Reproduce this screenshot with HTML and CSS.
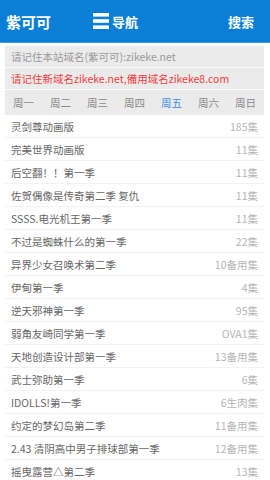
FILE: index.html
```html
<!DOCTYPE html>
<html lang="zh-CN">
<head>
<meta charset="utf-8">
<link rel="stylesheet" href="styles.css">
</head>
<body>
<header class="top">
  <div class="logo">紫可可</div>
  <div class="nav">
    <svg class="menu-ic" width="16" height="16" viewBox="0 0 16 16"><rect x="0" y="0" width="16" height="3.6" fill="#fff"/><rect x="0" y="6.2" width="16" height="3.6" fill="#fff"/><rect x="0" y="12.4" width="16" height="3.6" fill="#fff"/></svg>
    <span>导航</span>
  </div>
  <div class="search">搜索</div>
</header>
<main class="wrap">
  <div class="notice">请记住本站域名(紫可可):zikeke.net</div>
  <div class="notice red">请记住新域名zikeke.net,備用域名zikeke8.com</div>
  <div class="tabs">
    <span>周一</span><span>周二</span><span>周三</span><span>周四</span><span class="on">周五</span><span>周六</span><span>周日</span>
  </div>
  <ul class="list">
    <li><span class="t">灵剑尊动画版</span><span class="c">185集</span></li>
    <li><span class="t">完美世界动画版</span><span class="c">11集</span></li>
    <li><span class="t">后空翻！！第一季</span><span class="c">11集</span></li>
    <li><span class="t">佐贺偶像是传奇第二季 复仇</span><span class="c">11集</span></li>
    <li><span class="t">SSSS.电光机王第一季</span><span class="c">11集</span></li>
    <li><span class="t">不过是蜘蛛什么的第一季</span><span class="c">22集</span></li>
    <li><span class="t">异界少女召唤术第二季</span><span class="c">10备用集</span></li>
    <li><span class="t">伊甸第一季</span><span class="c">4集</span></li>
    <li><span class="t">逆天邪神第一季</span><span class="c">95集</span></li>
    <li><span class="t">弱角友崎同学第一季</span><span class="c">OVA1集</span></li>
    <li><span class="t">天地创造设计部第一季</span><span class="c">13备用集</span></li>
    <li><span class="t">武士弥助第一季</span><span class="c">6集</span></li>
    <li><span class="t">IDOLLS!第一季</span><span class="c">6生肉集</span></li>
    <li><span class="t">约定的梦幻岛第二季</span><span class="c">11备用集</span></li>
    <li><span class="t">2.43 清阴高中男子排球部第一季</span><span class="c">12备用集</span></li>
    <li><span class="t">摇曳露营△第二季</span><span class="c">13集</span></li>
  </ul>
</main>
</body>
</html>
```
FILE: styles.css
```css
* { box-sizing: border-box; }
html, body { margin: 0; padding: 0; }
body {
  font-family: "Noto Sans CJK SC", "Noto Sans", sans-serif;
  background: #fff;
  overflow: hidden;
}
.top {
  height: 43px;
  background: #0b7fd6;
  color: #fff;
  display: flex;
  align-items: center;
  padding: 0 16px 0 6px;
  border-bottom: 1px solid #3c9be3;
}
.logo { font-size: 15px; font-weight: bold; width: 87px; }
.nav { display: flex; align-items: center; gap: 3px; font-size: 13px; font-weight: bold; flex: 1; }
.menu-ic { display: block; }
.search { font-size: 13px; font-weight: bold; }
.wrap { padding: 3px 6px 0 5px; }
.notice {
  background: #ebebeb;
  color: #999;
  font-size: 10.5px;
  height: 21px;
  line-height: 21px;
  padding-left: 6px;
  margin-bottom: 1px;
  white-space: nowrap;
  overflow: hidden;
}
.notice.red { color: #f23c3c; }
.tabs {
  display: grid;
  grid-template-columns: repeat(7, 1fr);
  background: #ebebeb;
  height: 25px;
  align-items: center;
  font-size: 10.5px;
  color: #888;
  text-align: center;
  margin-top: 1px;
}
.tabs .on { color: #3d8fe0; }
.list { list-style: none; margin: 0; padding: 0; }
.list li {
  display: flex;
  justify-content: space-between;
  align-items: center;
  height: 23px;
  padding: 0 6px 0 6px;
  border-bottom: 1px solid #f2f2f2;
  font-size: 10.5px;
}
.list .t { color: #666; }
.list .c { color: #b5b5b5; }
```
